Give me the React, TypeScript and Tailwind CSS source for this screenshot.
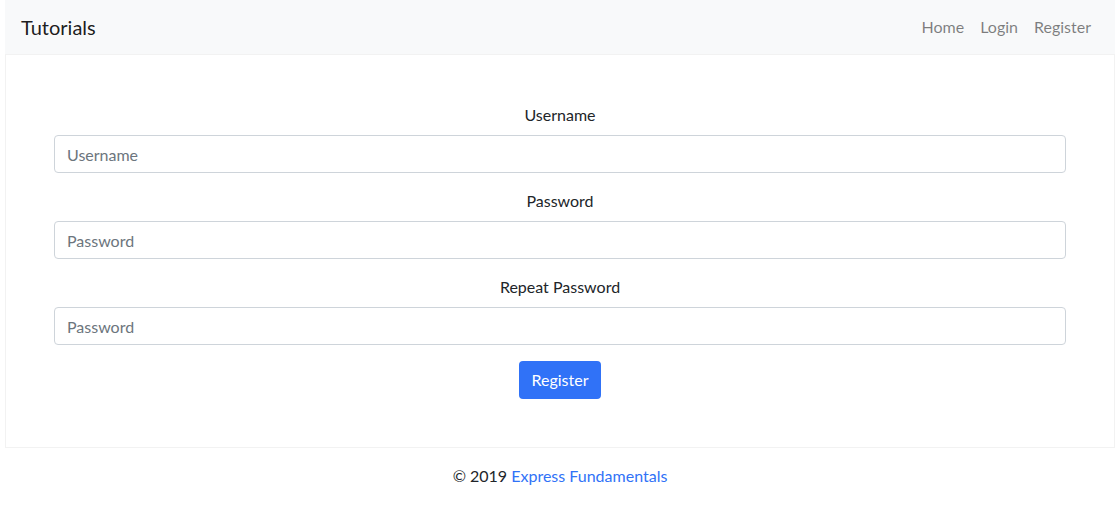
import React from "react";

const App = () => {
  const fields = [
    { label: "Username", placeholder: "Username", type: "text" },
    { label: "Password", placeholder: "Password", type: "password" },
    { label: "Repeat Password", placeholder: "Password", type: "password" },
  ];

  return (
    <div
      className="min-h-screen bg-white px-[5px] text-[#212529]"
      style={{ fontFamily: 'Lato, "Noto Sans", Arial, sans-serif' }}
    >
      <nav className="flex h-[54px] items-center justify-between bg-[#f8f9fa] px-4">
        <a className="text-[20px] leading-[30px] text-black/90">Tutorials</a>
        <ul className="flex text-base">
          <li>
            <a className="px-2 text-black/50">Home</a>
          </li>
          <li>
            <a className="px-2 text-black/50">Login</a>
          </li>
          <li>
            <a className="px-2 text-black/50">Register</a>
          </li>
        </ul>
      </nav>

      <div className="border border-[#f2f2f2] p-12">
        <form className="flex flex-col">
          {fields.map((field, index) => (
            <div key={index} className="mb-4 flex flex-col">
              <label className="mb-2 text-center text-base leading-6">
                {field.label}
              </label>
              <input
                type={field.type}
                placeholder={field.placeholder}
                className="h-[38px] w-full rounded border border-[#ced4da] px-3 text-base text-[#495057] outline-none placeholder:text-[#6c757d]"
              />
            </div>
          ))}
          <div className="flex justify-center">
            <button
              type="button"
              className="h-[38px] rounded bg-[#3072f7] px-3 text-base text-white"
            >
              Register
            </button>
          </div>
        </form>
      </div>

      <footer className="mt-4 text-center text-base leading-6">
        © 2019 <a className="text-[#3072f7]">Express Fundamentals</a>
      </footer>
    </div>
  );
};

export default App;
